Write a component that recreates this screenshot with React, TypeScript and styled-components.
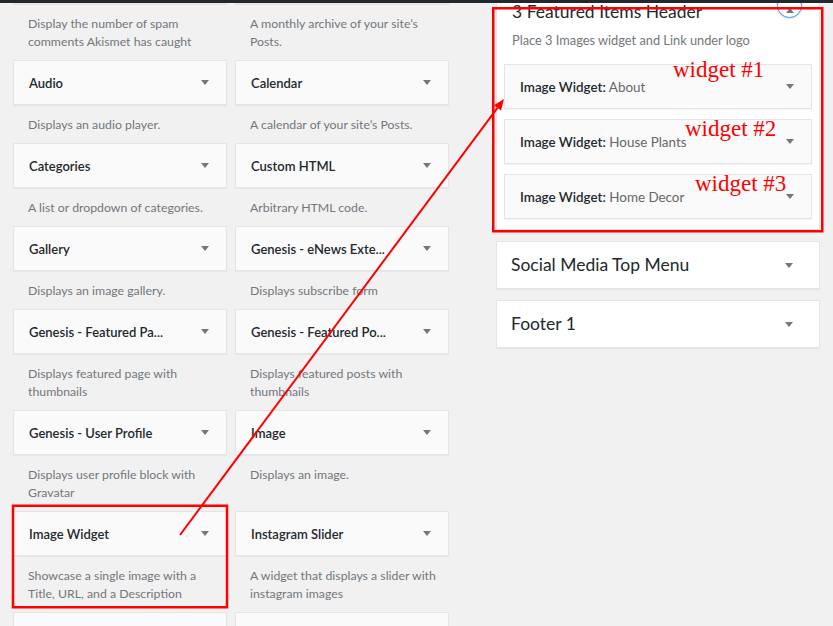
import React from "react";
import styled, { createGlobalStyle } from "styled-components";

const GlobalStyle = createGlobalStyle`
  html, body {
    margin: 0;
    padding: 0;
    height: 626px;
    overflow: hidden;
    background: #f1f1f1;
  }
  body {
    font-family: Lato, "Liberation Sans", sans-serif;
    -webkit-font-smoothing: antialiased;
  }
  * { box-sizing: border-box; }
`;

const Page = styled.div`
  position: relative;
  width: 833px;
  height: 626px;
  overflow: hidden;
  display: flex;
  align-items: flex-start;
  gap: 47px;
  padding-left: 13px;
`;

const AdminBar = styled.div`
  position: absolute;
  top: 0;
  left: 0;
  right: 0;
  height: 3px;
  background: #23282d;
  z-index: 3;
`;

const WidgetGrid = styled.div`
  margin-top: -41px;
  display: grid;
  grid-template-columns: 214px 214px;
  column-gap: 8px;
  align-content: start;
`;

const WidgetCell = styled.div`
  display: flex;
  flex-direction: column;
`;

const WidgetTop = styled.div<{ $tall?: boolean; $white?: boolean }>`
  height: ${(p) => (p.$tall ? "48px" : "45px")};
  display: flex;
  align-items: center;
  justify-content: space-between;
  padding: ${(p) => (p.$tall ? "0 26px 0 14px" : "0 17px 0 15px")};
  background: ${(p) => (p.$white ? "#fff" : "#fafafa")};
  border: 1px solid #e5e5e5;
  box-shadow: 0 1px 1px rgba(0, 0, 0, 0.04);
`;

const WidgetTitle = styled.div<{ $inner?: boolean }>`
  font-size: ${(p) => (p.$inner ? "13.4px" : "13px")};
  font-weight: 600;
  color: #23282d;
  white-space: nowrap;
`;

const InWidgetTitle = styled.span`
  font-weight: 400;
  color: #666;
`;

const Desc = styled.div`
  padding: 11px 8px 9px 15px;
  font-size: 12.3px;
  line-height: 18px;
  color: #72777c;
  white-space: pre;
`;

const Sidebars = styled.div`
  width: 324px;
  margin-top: -8px;
  display: flex;
  flex-direction: column;
  gap: 11px;
`;

const SidebarPanel = styled.div`
  background: #fff;
  border: 1px solid #e5e5e5;
  box-shadow: 0 1px 1px rgba(0, 0, 0, 0.04);
  padding: 7px 7px 10px;
`;

const SidebarHeader = styled.div`
  display: flex;
  justify-content: space-between;
  align-items: flex-start;
  padding: 0 10px 0 8px;
`;

const SidebarName = styled.div`
  font-size: 17.5px;
  line-height: 24px;
  font-weight: 400;
  color: #23282d;
  white-space: nowrap;
`;

const Toggle = styled.div`
  width: 25px;
  height: 25px;
  margin-top: -7px;
  border-radius: 50%;
  border: 1px solid #5b9dd9;
  box-shadow: 0 0 2px rgba(30, 140, 190, 0.6);
  background: #fff;
  display: flex;
  align-items: flex-end;
  justify-content: center;
  padding-bottom: 4px;
`;

const SidebarDesc = styled.div`
  margin-top: 7px;
  padding-left: 8px;
  font-size: 12.8px;
  line-height: 18px;
  color: #72777c;
`;

const SidebarList = styled.div`
  margin-top: 15px;
  display: flex;
  flex-direction: column;
  gap: 10px;
`;

const Overlay = styled.svg`
  position: absolute;
  top: 0;
  left: 0;
  width: 833px;
  height: 626px;
  pointer-events: none;
  z-index: 2;
`;

const Label = styled.text`
  font-family: "Liberation Serif", "Times New Roman", serif;
  font-size: 23px;
  fill: #ff0000;
`;

const Caret = ({ up }: { up?: boolean }) => (
  <svg width="8" height="5" viewBox="0 0 8 5">
    <polygon points={up ? "0,5 8,5 4,0" : "0,0 8,0 4,5"} fill="#72777c" />
  </svg>
);

type W = { title: string; desc: string };

const rows: [W, W][] = [
  [
    { title: "", desc: "Display the number of spam\ncomments Akismet has caught" },
    { title: "", desc: "A monthly archive of your site\u2019s\nPosts." },
  ],
  [
    { title: "Audio", desc: "Displays an audio player." },
    { title: "Calendar", desc: "A calendar of your site\u2019s Posts." },
  ],
  [
    { title: "Categories", desc: "A list or dropdown of categories." },
    { title: "Custom HTML", desc: "Arbitrary HTML code." },
  ],
  [
    { title: "Gallery", desc: "Displays an image gallery." },
    { title: "Genesis - eNews Exte...", desc: "Displays subscribe form" },
  ],
  [
    { title: "Genesis - Featured Pa...", desc: "Displays featured page with\nthumbnails" },
    { title: "Genesis - Featured Po...", desc: "Displays featured posts with\nthumbnails" },
  ],
  [
    { title: "Genesis - User Profile", desc: "Displays user profile block with\nGravatar" },
    { title: "Image", desc: "Displays an image." },
  ],
  [
    { title: "Image Widget", desc: "Showcase a single image with a\nTitle, URL, and a Description" },
    { title: "Instagram Slider", desc: "A widget that displays a slider with\ninstagram images" },
  ],
  [
    { title: "", desc: "" },
    { title: "", desc: "" },
  ],
];

const inner = ["About", "House Plants", "Home Decor"];

// arrow geometry
const tip = { x: 504, y: 99 };
const start = { x: 180, y: 535 };
const dx = tip.x - start.x;
const dy = tip.y - start.y;
const len = Math.sqrt(dx * dx + dy * dy);
const ux = dx / len;
const uy = dy / len;
const base = { x: tip.x - 11 * ux, y: tip.y - 11 * uy };
const nx = -uy;
const ny = ux;
const head = `${tip.x},${tip.y} ${base.x + 4.5 * nx},${base.y + 4.5 * ny} ${base.x - 4.5 * nx},${base.y - 4.5 * ny}`;

export default function App() {
  return (
    <>
      <GlobalStyle />
      <Page>
        <AdminBar />
        <WidgetGrid>
          {rows.flat().map((w, i) => (
            <WidgetCell key={i}>
              <WidgetTop>
                <WidgetTitle>{w.title}</WidgetTitle>
                <Caret />
              </WidgetTop>
              {w.desc && <Desc>{w.desc}</Desc>}
            </WidgetCell>
          ))}
        </WidgetGrid>
        <Sidebars>
          <SidebarPanel>
            <SidebarHeader>
              <SidebarName>3 Featured Items Header</SidebarName>
              <Toggle>
                <Caret up />
              </Toggle>
            </SidebarHeader>
            <SidebarDesc>Place 3 Images widget and Link under logo</SidebarDesc>
            <SidebarList>
              {inner.map((t) => (
                <WidgetTop key={t}>
                  <WidgetTitle $inner>
                    Image Widget:<InWidgetTitle> {t}</InWidgetTitle>
                  </WidgetTitle>
                  <Caret />
                </WidgetTop>
              ))}
            </SidebarList>
          </SidebarPanel>
          {["Social Media Top Menu", "Footer 1"].map((t) => (
            <WidgetTop key={t} $tall $white>
              <SidebarName>{t}</SidebarName>
              <Caret />
            </WidgetTop>
          ))}
        </Sidebars>
        <Overlay viewBox="0 0 833 626">
          <rect x="493.25" y="8.25" width="329" height="223" fill="none" stroke="#ff0000" strokeWidth="2.5" />
          <rect x="13" y="505.75" width="214" height="101.5" fill="none" stroke="#ff0000" strokeWidth="2.5" />
          <line x1={start.x} y1={start.y} x2={base.x} y2={base.y} stroke="#ff0000" strokeWidth="2" />
          <polygon points={head} fill="#ff0000" />
          <Label x="673" y="77">widget #1</Label>
          <Label x="685" y="136">widget #2</Label>
          <Label x="695" y="191">widget #3</Label>
        </Overlay>
      </Page>
    </>
  );
}
